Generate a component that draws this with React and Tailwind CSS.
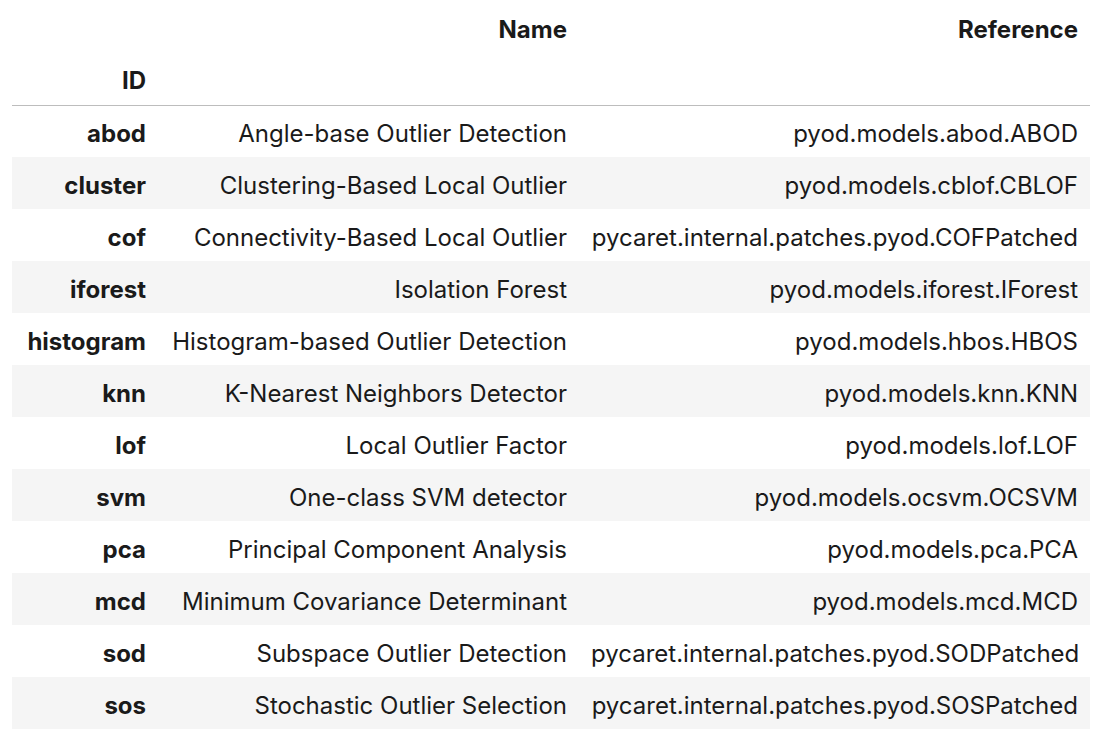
const ROWS = [
  ['abod', 'Angle-base Outlier Detection', 'pyod.models.abod.ABOD'],
  ['cluster', 'Clustering-Based Local Outlier', 'pyod.models.cblof.CBLOF'],
  ['cof', 'Connectivity-Based Local Outlier', 'pycaret.internal.patches.pyod.COFPatched'],
  ['iforest', 'Isolation Forest', 'pyod.models.iforest.IForest'],
  ['histogram', 'Histogram-based Outlier Detection', 'pyod.models.hbos.HBOS'],
  ['knn', 'K-Nearest Neighbors Detector', 'pyod.models.knn.KNN'],
  ['lof', 'Local Outlier Factor', 'pyod.models.lof.LOF'],
  ['svm', 'One-class SVM detector', 'pyod.models.ocsvm.OCSVM'],
  ['pca', 'Principal Component Analysis', 'pyod.models.pca.PCA'],
  ['mcd', 'Minimum Covariance Determinant', 'pyod.models.mcd.MCD'],
  ['sod', 'Subspace Outlier Detection', 'pycaret.internal.patches.pyod.SODPatched'],
  ['sos', 'Stochastic Outlier Selection', 'pycaret.internal.patches.pyod.SOSPatched'],
]

// pandas-style cell: right aligned, 0.5em padding, text nudged a bit low
const cell = 'px-3 pt-[5px] pb-0 h-[52px] text-right whitespace-nowrap align-middle'

export default function App() {
  return (
    <div className="min-h-screen bg-white pt-px pl-3 font-['Inter',sans-serif] text-[24px] leading-7 text-[#1a1a1a]">
      <table className="table-fixed border-collapse w-[1078px]">
        <colgroup>
          <col className="w-[146px]" />
          <col className="w-[421px]" />
          <col className="w-[511px]" />
        </colgroup>
        <thead>
          <tr>
            <th className={cell} />
            <th className={`${cell} font-bold`}>Name</th>
            <th className={`${cell} font-bold`}>Reference</th>
          </tr>
          <tr className="border-b border-[#bdbdbd]">
            <th className={`${cell} font-bold`}>ID</th>
            <th className={cell} />
            <th className={cell} />
          </tr>
        </thead>
        <tbody>
          {ROWS.map(([id, name, ref], i) => (
            <tr key={id} className={i % 2 === 1 ? 'bg-[#f5f5f5]' : 'bg-white'}>
              <th className={`${cell} font-bold`}>{id}</th>
              <td className={`${cell} font-normal`}>{name}</td>
              <td className={`${cell} font-normal`}>{ref}</td>
            </tr>
          ))}
        </tbody>
      </table>
    </div>
  )
}
